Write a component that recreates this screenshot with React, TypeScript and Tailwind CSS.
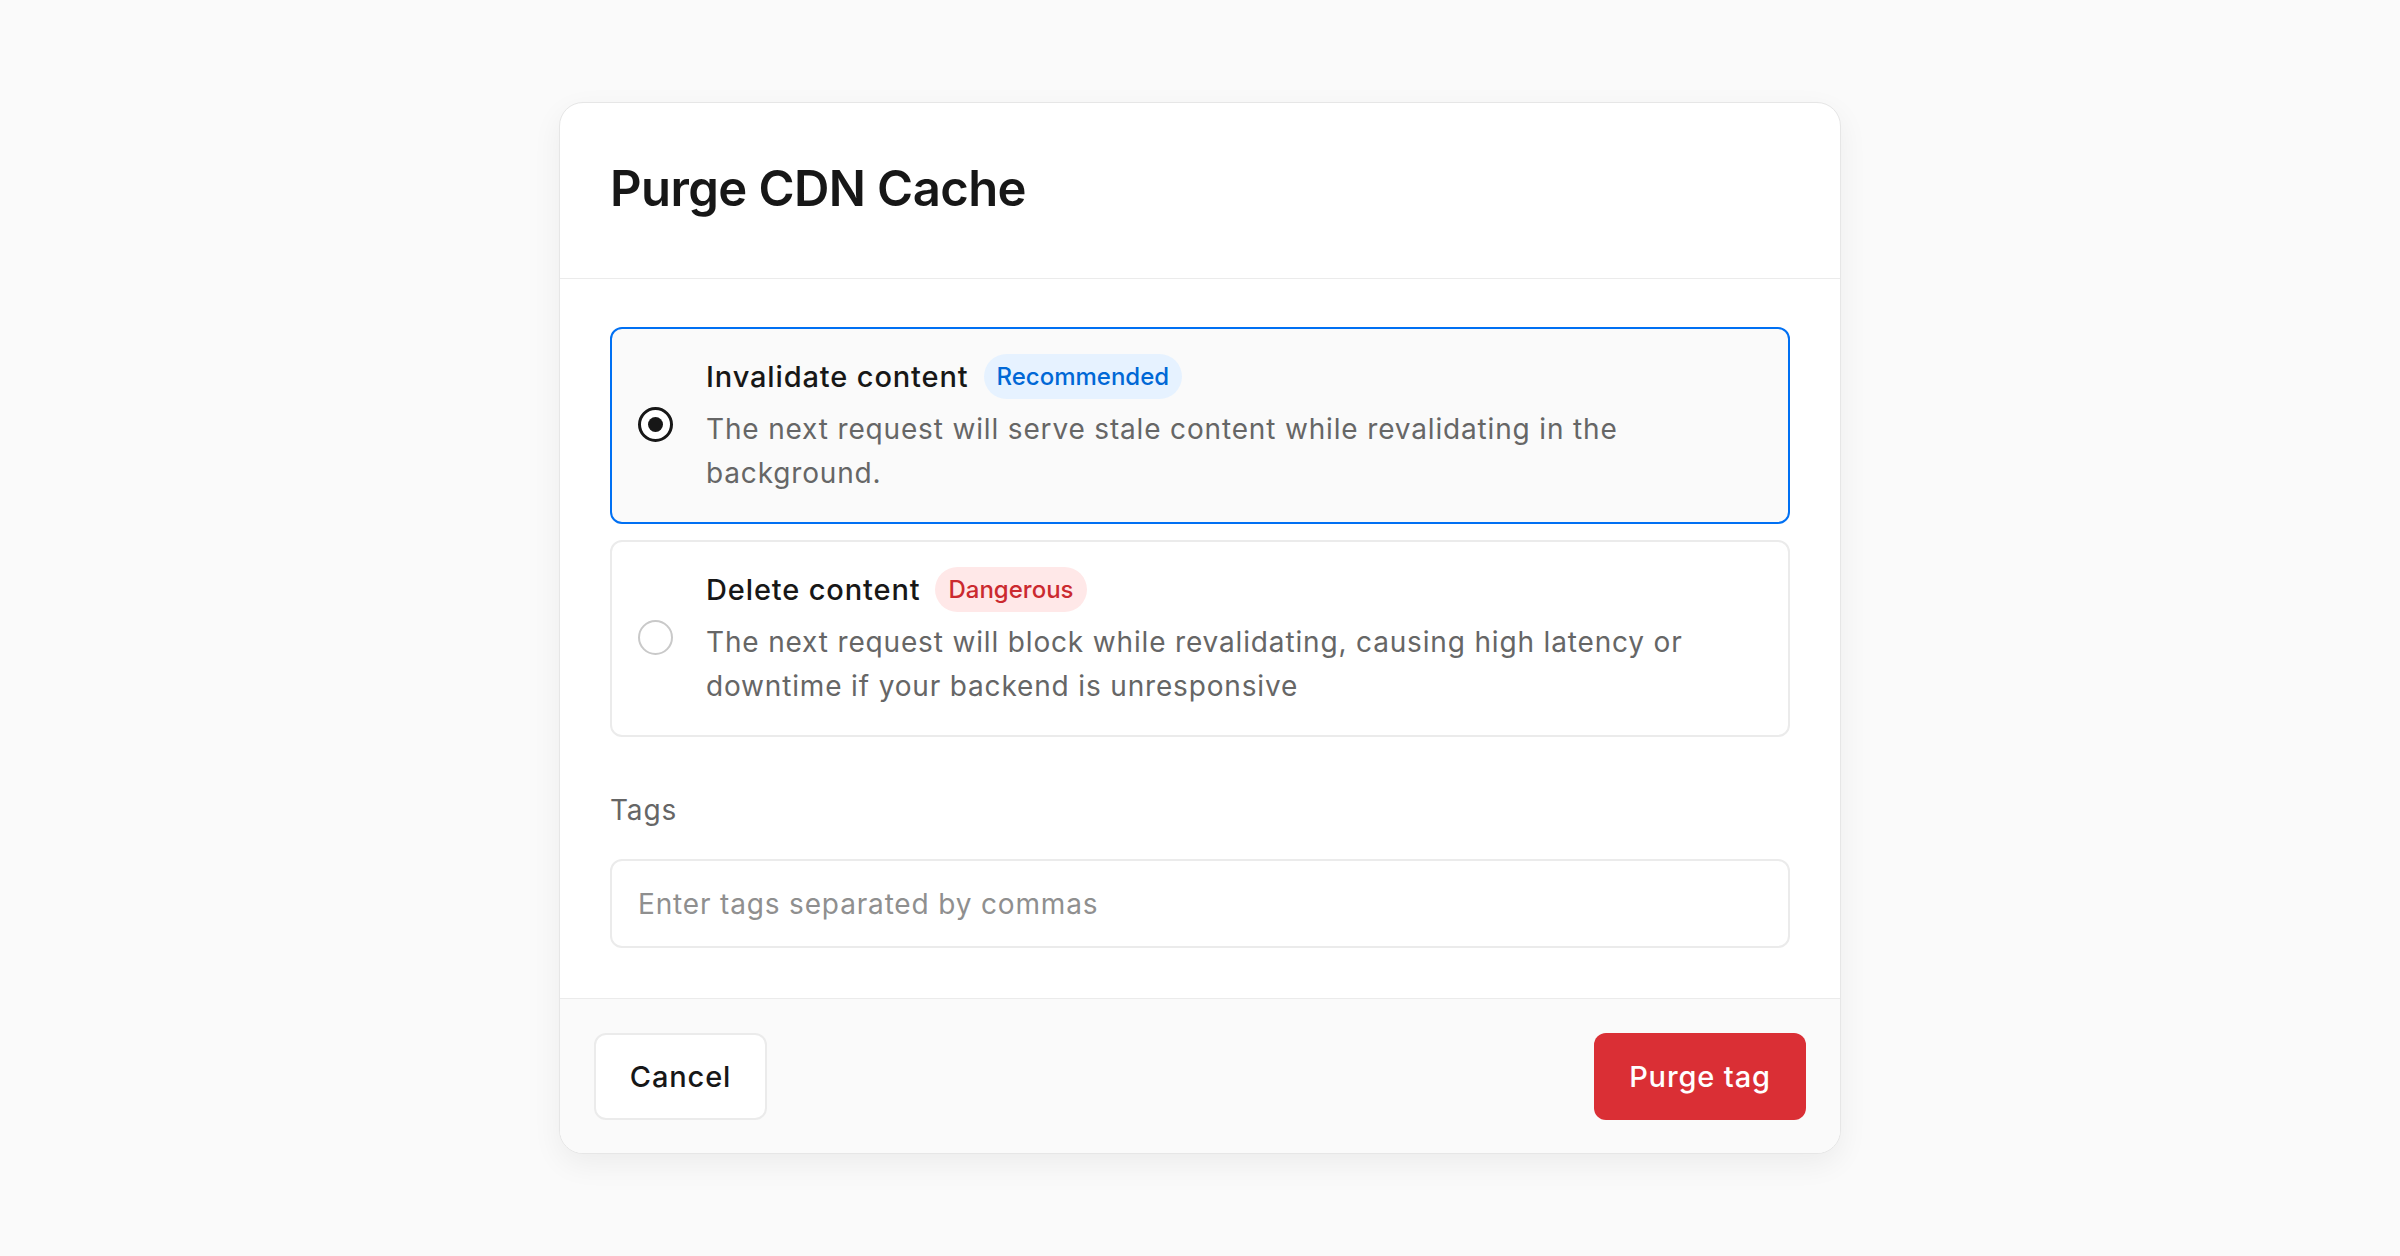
import { useState } from "react";

type Option = {
  id: string;
  title: string;
  desc: string;
  badge: string;
  tone: "blue" | "red";
};

const options: Option[] = [
  {
    id: "invalidate",
    title: "Invalidate content",
    desc: "The next request will serve stale content while revalidating in the background.",
    badge: "Recommended",
    tone: "blue",
  },
  {
    id: "delete",
    title: "Delete content",
    desc: "The next request will block while revalidating, causing high latency or downtime if your backend is unresponsive",
    badge: "Dangerous",
    tone: "red",
  },
];

function Radio({ checked }: { checked: boolean }) {
  if (checked) {
    return (
      <span className="w-[35px] h-[35px] shrink-0 rounded-full border-[3px] border-[#171717] bg-white flex items-center justify-center">
        <span className="w-[15px] h-[15px] rounded-full bg-[#171717]" />
      </span>
    );
  }
  return <span className="w-[35px] h-[35px] shrink-0 rounded-full border-2 border-[#c9c9c9] bg-white" />;
}

function OptionCard({ option, selected, onSelect }: { option: Option; selected: boolean; onSelect: () => void }) {
  const badgeClass =
    option.tone === "blue" ? "bg-[#e6f2ff] text-[#0068d6]" : "bg-[#ffe8e8] text-[#cb2a2f]";

  return (
    <button
      type="button"
      onClick={onSelect}
      className={`w-full text-left flex items-center gap-[33px] rounded-[12px] border-2 pl-[26px] pr-[26px] pt-[25px] pb-[27px] ${
        selected ? "border-[#0070f3] bg-[#fafafa]" : "border-[#ebebeb] bg-white"
      }`}
    >
      <Radio checked={selected} />
      <div className="flex-1 flex flex-col gap-[8px]">
        <div className="flex items-center gap-[15px]">
          <span className="text-[29px] font-medium tracking-[0.03em] text-[#171717] leading-[44px]">
            {option.title}
          </span>
          <span className={`h-[45px] px-[13px] rounded-full flex items-center text-[24px] font-medium ${badgeClass}`}>
            {option.badge}
          </span>
        </div>
        <p className="text-[28px] leading-[44px] tracking-[0.03em] text-[#666666]">{option.desc}</p>
      </div>
    </button>
  );
}

export default function App() {
  const [selected, setSelected] = useState("invalidate");

  return (
    <div
      className="min-h-screen bg-[#fafafa] flex justify-center pt-[102px]"
      style={{ fontFamily: "Inter, 'Noto Sans', sans-serif" }}
    >
      <div className="w-[1282px] h-fit bg-white border border-[#e6e6e6] rounded-[24px] overflow-hidden shadow-[0_10px_30px_rgba(0,0,0,0.06)]">
        {/* header */}
        <div className="pl-[50px] pt-[58px] pb-[61px] border-b border-[#ebebeb]">
          <h1 className="text-[49px] leading-[56px] font-semibold tracking-[-0.012em] text-[#171717]">
            Purge CDN Cache
          </h1>
        </div>

        {/* body */}
        <div className="px-[50px] pt-[48px] pb-[50px]">
          <div className="flex flex-col gap-[16px]">
            {options.map((o) => (
              <OptionCard key={o.id} option={o} selected={selected === o.id} onSelect={() => setSelected(o.id)} />
            ))}
          </div>

          <label className="block mt-[51px] text-[28px] leading-[44px] tracking-[0.03em] text-[#666666]">Tags</label>
          <input
            className="mt-[27px] w-full h-[89px] rounded-[12px] border-2 border-[#ebebeb] bg-white px-[26px] text-[28px] tracking-[0.03em] text-[#171717] placeholder:text-[#8f8f8f] outline-none"
            placeholder="Enter tags separated by commas"
          />
        </div>

        {/* footer */}
        <div className="bg-[#fafafa] border-t border-[#ebebeb] px-[34px] pt-[34px] pb-[33px] flex items-center justify-between">
          <button className="w-[173px] h-[87px] rounded-[12px] border-2 border-[#ebebeb] bg-white text-[29px] tracking-[0.03em] font-medium text-[#171717]">
            Cancel
          </button>
          <button className="w-[212px] h-[87px] rounded-[12px] bg-[#da2f35] text-[29px] tracking-[0.03em] font-medium text-white">
            Purge tag
          </button>
        </div>
      </div>
    </div>
  );
}
